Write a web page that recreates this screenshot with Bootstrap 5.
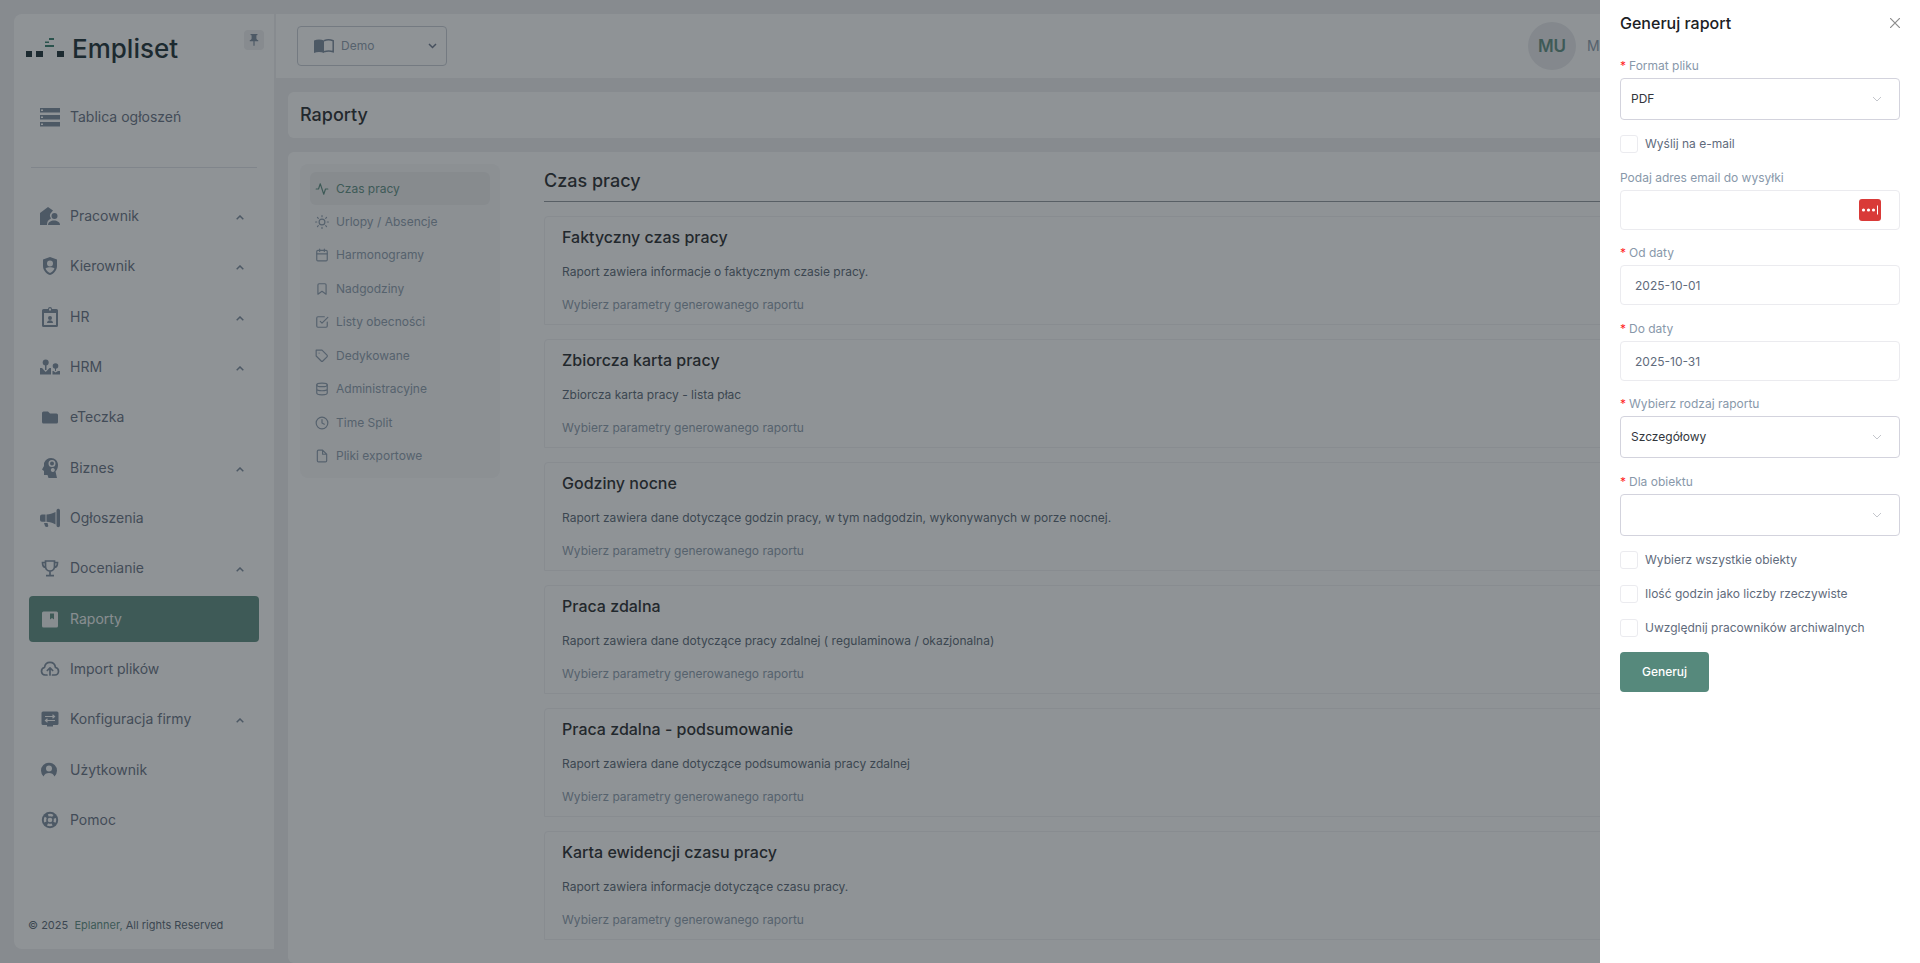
<!DOCTYPE html>
<html lang="pl">
<head>
<meta charset="utf-8">
<meta name="viewport" content="width=device-width, initial-scale=1">
<title>Raporty – Empliset</title>
<link href="https://cdn.jsdelivr.net/npm/bootstrap@5.3.0/dist/css/bootstrap.min.css" rel="stylesheet">
<style>
:root{--green:#56897c;--ink:#1b2124;--slate:#67748a;--muted:#8898aa;--line:#ebebef}
body{font-family:Inter,"Liberation Sans",sans-serif;background:#eeeef0;color:#525f7f;font-size:12px;line-height:20px;height:100vh;overflow:hidden}
a{text-decoration:none;color:inherit}
svg{display:block;flex:none}
.fi{width:14px;height:14px;fill:none;stroke:currentColor;stroke-width:2;stroke-linecap:round;stroke-linejoin:round}
.shell{height:100vh;padding:14px 14px 0}
.sidebar{width:260px;height:calc(100vh - 28px);background:#fff;border-radius:8px 0 0 8px;flex:none}
.brand-row{height:80px;padding:16px 10px 0 12px}
.brand-name{font-size:26px;font-weight:500;line-height:22px;color:#10242a}
.pin{width:20px;height:20px;border-radius:4px;background:#eeeef0;color:#76869a}
.side-link{height:46px;padding:0 15px 0 11px;gap:10px;border-radius:4px;font-size:14px;color:#5f6b7d}
.side-link svg.ico{width:20px;height:20px;fill:#76869a}
.side-link .chev{width:8px;height:5px;fill:none;stroke:#76869a;stroke-width:1.5;margin:3px 0 0 auto}
.side-link.active{background:var(--green);color:#f0f3f3}
.side-link.active svg.ico{fill:#f0f3f3}
.side-menu{padding:0 15px;margin:0;list-style:none}
.side-rule{margin:27px 17px 25px;border-top:1px solid #dfe2e8}
.side-foot{height:106px;padding:72px 14px 0;font-size:11px;color:#525f6f}
.side-foot a{color:var(--green)}
.topbar{height:64px;background:#fff;margin-left:2px;padding:0 0 0 21px}
.firm{width:150px;height:40px;border:1px solid #c6cbd4;border-radius:4px;background:#fff;color:var(--muted);padding:0 9px 0 16px;gap:7px;font-size:12px}
.avatar{width:48px;height:48px;border-radius:50%;background:#e8e9ed;color:var(--green);font-size:17px;font-weight:600}
.user-box{width:378px;gap:11px;font-size:14px;color:var(--muted)}
.page-column{min-width:0}
.content-area{padding:14px 0 0 14px;gap:14px;min-height:0}
.panel{background:#fff;border-radius:6px}
.page-title{font-size:18px;font-weight:500;color:var(--ink);line-height:46px;margin:0;padding:0 12px}
.main-panel{padding:12px;gap:44px;min-height:0}
.tabs-box{width:200px;height:314px;background:#f8f8f9;border-radius:8px;padding:8px 10px 5px;display:grid;grid-auto-rows:1fr;flex:none}
.tabs-box a{padding:0 5px;gap:7px;color:var(--muted);border-radius:6px}
.tabs-box a.active{background:#eeeeef;color:var(--green)}
.section-title{font-size:18px;font-weight:500;color:var(--ink);line-height:34px;margin:0 0 14px;padding-bottom:3px;border-bottom:1px solid #8d9398}
.report{border:1px solid #f0f0f2;border-radius:4px 4px 0 0;padding:7px 17px 8px;margin-bottom:14px}
.report h3{font-size:16px;font-weight:500;line-height:26px;color:var(--ink);margin:0 0 12px}
.report p{margin:0 0 12px;line-height:20px;color:#525f6f}
.report a{display:block;color:var(--muted);line-height:22px}
.offcanvas-backdrop.veil{background:rgb(40,47,53);opacity:.52;width:100%;height:100%}
.offcanvas.drawer{--bs-offcanvas-width:320px;--bs-offcanvas-border-width:0;padding:8px 20px;background:#fff;color:#5f6b7c;outline:0}
.drawer-title{font-size:16px;font-weight:500;line-height:30px;color:var(--ink);margin:0}
.drawer-close{width:10px;height:10px;padding:0;border:0;background:none;color:#8c8c8c}
.drawer form{padding-top:16px}
.field{margin-bottom:12px}
.field-tight{margin-bottom:11px}
.field label,.field-tight label{display:block;line-height:24px;color:var(--muted)}
.req::before{content:"*";color:#ff1f1f;margin-right:3px}
.drawer .form-select{height:42px;border:1px solid #d3d3dd;border-radius:4px;font-size:12px;color:#32363c;padding:0 30px 0 10px;background-image:url("data:image/svg+xml,%3csvg xmlns='http://www.w3.org/2000/svg' viewBox='0 0 10 6'%3e%3cpath d='M1 1l4 4 4-4' fill='none' stroke='%23c4c6cc'/%3e%3c/svg%3e");background-size:10px 6px;background-position:right 17px center}
.drawer .form-control{height:40px;border:1px solid var(--line);border-radius:4px;font-size:12px;color:#5f6b7c;padding:0 14px}
.check-row{height:24px;margin-bottom:10px;gap:7px}
.check-row .form-check-input{width:18px;height:18px;margin:0;border:1px solid var(--line);border-radius:3px;background:#fff}
.pass-icon{right:19px;top:9px}
.go{width:89px;height:40px;margin-top:2px;border:0;border-radius:4px;background:var(--green);color:#fff;font-size:12px;font-weight:500}
</style>
</head>
<body>
<div class="shell d-flex">
  <aside class="sidebar d-flex flex-column">
    <div class="brand-row d-flex align-items-start">
      <a href="#" class="d-flex align-items-start gap-2 mt-1 pt-1">
        <svg width="38" height="30" viewBox="0 0 38 30"><g fill="#10242a"><path d="M0 13h6v6H0zM10 13h7v6h-7zM31 13h7v6h-7z"/></g><path fill="#2e7a66" d="M23 0h5v2h-5zM19 3.500h4v1.500h-4zM19 7h9v2h-9z"/></svg>
        <span class="brand-name">Empliset</span>
      </a>
      <button type="button" class="pin btn p-0 border-0 ms-auto d-flex align-items-center justify-content-center" aria-label="Przypnij">
        <svg width="12" height="12" viewBox="5 2 14 20" fill="currentColor"><path d="M16 9V4h1a1 1 0 0 0 0-2H7a1 1 0 0 0 0 2h1v5c0 1.700-1.300 3-3 3v2h6v7l1 1 1-1v-7h6v-2c-1.700 0-3-1.300-3-3z"/></svg>
      </button>
    </div>
    <div class="side-menu"><a href="#" class="side-link d-flex align-items-center"><svg class="ico" viewBox="0 0 20 20"><path fill-rule="evenodd" d="M0 1h20v4.500H0zM0 8h20v4.500H0zM0 15h20v4.500H0zM1 2.500v1.500h2V2.500zM1 9.500V11h2V9.500zM1 16.500V18h2v-1.500z"/></svg>Tablica ogłoszeń</a></div>
    <div class="side-rule"></div>
    <ul class="side-menu d-flex flex-column justify-content-between flex-grow-1">
      <li><a href="#" class="side-link d-flex align-items-center"><svg class="ico" viewBox="0 0 20 20"><path d="M0 19V7l8-6 5 3.500-2.500 3C9 10 11 12 11 12.500c-3 1.500-4 3-4 6.500z"/><circle cx="14.500" cy="10" r="3"/><path d="M8 19c0-3 3-4.500 6-4.500s6 1.500 6 4.500z"/></svg>Pracownik<svg class="chev" viewBox="0 0 8 5"><path d="M.7 4.300 4 1l3.300 3.300"/></svg></a></li>
      <li><a href="#" class="side-link d-flex align-items-center"><svg class="ico" viewBox="0 0 20 20"><path fill-rule="evenodd" d="M10 1l7 2.600V10c0 4.200-3 7.700-7 9-4-1.300-7-4.800-7-9V3.600zM10 4.500a3 3 0 1 0 0 6 3 3 0 0 0 0-6zM5.500 12.500c1 2 2.500 3.500 4.500 4.500 2-1 3.500-2.500 4.500-4.500-1.500-1-3-1.200-4.500-1.200s-3 .2-4.500 1.200z"/></svg>Kierownik<svg class="chev" viewBox="0 0 8 5"><path d="M.7 4.300 4 1l3.300 3.300"/></svg></a></li>
      <li><a href="#" class="side-link d-flex align-items-center"><svg class="ico" viewBox="0 0 20 20"><path fill-rule="evenodd" d="M2 3.500Q2 2 3.500 2H8a2 2 0 0 1 4 0h4.500Q18 2 18 3.500v15q0 1.500-1.500 1.500h-13Q2 20 2 18.500zM4 6v12h12V6zM9 1.500v2h2v-2z"/><circle cx="10" cy="11" r="2"/><path d="M7 16c0-2 1.500-2.800 3-2.800s3 .8 3 2.800z"/></svg>HR<svg class="chev" viewBox="0 0 8 5"><path d="M.7 4.300 4 1l3.300 3.300"/></svg></a></li>
      <li><a href="#" class="side-link d-flex align-items-center"><svg class="ico" viewBox="0 0 20 20"><circle cx="5.700" cy="5.500" r="3"/><path d="M5 8h1.500v5H5z"/><path d="M0 17.500V11l2 0 3.700 4L9.500 11 11 11v6.500z"/><circle cx="15.500" cy="9" r="2.800"/><path d="M15 11h1v3h-1zM12.500 17.500V14l1 0 2 1.500 2.500-1.500 2 0v3.500z"/></svg>HRM<svg class="chev" viewBox="0 0 8 5"><path d="M.7 4.300 4 1l3.300 3.300"/></svg></a></li>
      <li><a href="#" class="side-link d-flex align-items-center"><svg class="ico" viewBox="0 0 20 20"><path d="M2 6q0-1.500 1.500-1.500H8L10 6.500h6.500Q18 6.500 18 8v7q0 1.500-1.500 1.500h-13Q2 16.500 2 15z"/></svg>eTeczka</a></li>
      <li><a href="#" class="side-link d-flex align-items-center"><svg class="ico" viewBox="0 0 20 20"><path fill-rule="evenodd" d="M4 5C5.500 1.500 8 0 11 0c4 0 7 3 7 7 0 3-1 5-2.500 6.500L17 20H8.500l-1-3H4v-4L2 11.500 4 8zM12 2a3.500 3.500 0 1 0 0 7 3.500 3.500 0 0 0 0-7zM12.800 10a2 2 0 1 0 .01 0z"/><circle cx="12" cy="5.500" r="2"/></svg>Biznes<svg class="chev" viewBox="0 0 8 5"><path d="M.7 4.300 4 1l3.300 3.300"/></svg></a></li>
      <li><a href="#" class="side-link d-flex align-items-center"><svg class="ico" viewBox="0 0 20 20"><path d="M16.500 2.500a1.500 1.500 0 0 1 3.500 0v15a1.500 1.500 0 0 1-3.500 0zM15.500 4v12.500C12 14.500 10 14 6.500 13.800V6.500C10 6.300 12 5.500 15.500 4zM5.500 6.500v7.300H2Q0 13.800 0 12V8.500q0-2 2-2zM4 15h3.500l.8 3q0 1-1.500 1-1.500 0-1.800-1z"/></svg>Ogłoszenia</a></li>
      <li><a href="#" class="side-link d-flex align-items-center"><svg class="ico" viewBox="0 0 20 20"><path fill="none" stroke="#76869a" stroke-width="1.700" d="M5.500 3h9v5.500a4.500 4.500 0 0 1-9 0zM5.500 4.500h-3c0 3 1 5 3.500 5M14.500 4.500h3c0 3-1 5-3.500 5M10 13v4.500M6 17.700h8"/></svg>Docenianie<svg class="chev" viewBox="0 0 8 5"><path d="M.7 4.300 4 1l3.300 3.300"/></svg></a></li>
      <li><a href="#" class="side-link active d-flex align-items-center" aria-current="page"><svg class="ico" viewBox="0 0 20 20"><path fill-rule="evenodd" d="M2 4q0-1.500 1.500-1.500h13Q18 2.500 18 4v13q0 1.500-1.500 1.500h-13Q2 18.500 2 17zM10 4.500v6l2-1.500 2 1.500v-6z"/></svg>Raporty</a></li>
      <li><a href="#" class="side-link d-flex align-items-center"><svg class="ico" viewBox="0 0 20 20"><path fill="none" stroke="#76869a" stroke-width="1.700" stroke-linecap="round" stroke-linejoin="round" d="M7 16H5a3.800 3.800 0 0 1-.5-7.500C5 5 7.500 3.300 10 3.300c3 0 5 2 5.500 5.200 2 .3 3 2 3 3.700 0 2-1.500 3.800-3.500 3.800h-2.500M10 16V9M7.300 11.500 10 8.800l2.700 2.700"/></svg>Import plików</a></li>
      <li><a href="#" class="side-link d-flex align-items-center"><svg class="ico" viewBox="0 0 20 20"><path d="M1.500 4q0-1.500 1.500-1.500h14q1.500 0 1.500 1.500v10.500q0 1.500-1.500 1.500h-4v1.500H7V16H3q-1.500 0-1.500-1.500z"/><path fill="none" stroke="#fff" stroke-width="1.200" d="M5 7.500h9M12.500 5.800l2 1.700-2 1.700M15 11.500H6M7.500 9.800l-2 1.700 2 1.700"/></svg>Konfiguracja firmy<svg class="chev" viewBox="0 0 8 5"><path d="M.7 4.300 4 1l3.300 3.300"/></svg></a></li>
      <li><a href="#" class="side-link d-flex align-items-center"><svg class="ico" viewBox="0 0 20 20"><path fill-rule="evenodd" d="M3.500 16.500A8 8 0 1 1 14.500 16.500C13.500 14 11.500 13 9 13s-4.500 1-5.500 3.500zM9 5.500a3 3 0 1 0 0 6 3 3 0 0 0 0-6z"/></svg>Użytkownik</a></li>
      <li><a href="#" class="side-link d-flex align-items-center"><svg class="ico" viewBox="0 0 20 20"><circle cx="10" cy="10" r="8.200"/><circle cx="10" cy="10" r="5" fill="none" stroke="#fff" stroke-width="2.400" stroke-dasharray="4.800 3.050" stroke-dashoffset="2.400"/><circle cx="10" cy="10" r="2.300" fill="#fff"/></svg>Pomoc</a></li>
    </ul>
    <div class="side-foot">© 2025 &nbsp;<a href="#">Eplanner,</a> All rights Reserved</div>
  </aside>

  <div class="page-column d-flex flex-column flex-grow-1">
    <header class="topbar d-flex align-items-center">
      <button type="button" class="firm d-flex align-items-center">
        <svg width="20" height="14" viewBox="0 0 20 14"><path fill="#76869a" d="M0 1.500C3 0 7 0 10 1.500V14C7 12.500 3 12.500 0 14z"/><path fill="none" stroke="#76869a" stroke-width="1.500" d="M10 1.800c3-1.300 6-1.300 9.200 0v11c-3-1-6-1-9.200 0"/></svg>
        Demo
        <svg class="ms-auto" width="9" height="6" viewBox="0 0 9 6" fill="none" stroke="#67748a" stroke-width="1.500"><path d="M1 1l3.500 3.500L8 1"/></svg>
      </button>
      <div class="user-box d-flex align-items-center ms-auto"><span class="avatar d-flex align-items-center justify-content-center">MU</span><span>M</span></div>
    </header>
    <main class="content-area d-flex flex-column flex-grow-1">
      <div class="panel"><h1 class="page-title">Raporty</h1></div>
      <div class="panel main-panel d-flex flex-grow-1 align-items-start">
        <nav class="tabs-box">
          <a href="#" class="active d-flex align-items-center"><svg class="fi" viewBox="0 0 24 24"><path d="M22 12h-4l-3 9L9 3l-3 9H2"/></svg>Czas pracy</a>
          <a href="#" class="d-flex align-items-center"><svg class="fi" viewBox="0 0 24 24"><circle cx="12" cy="12" r="5"/><path d="M12 1v2M12 21v2M4.220 4.220l1.420 1.420M18.360 18.360l1.420 1.420M1 12h2M21 12h2M4.220 19.780l1.420-1.420M18.360 5.640l1.420-1.420"/></svg>Urlopy / Absencje</a>
          <a href="#" class="d-flex align-items-center"><svg class="fi" viewBox="0 0 24 24"><rect x="3" y="4" width="18" height="18" rx="2"/><path d="M16 2v4M8 2v4M3 10h18"/></svg>Harmonogramy</a>
          <a href="#" class="d-flex align-items-center"><svg class="fi" viewBox="0 0 24 24"><path d="M19 21l-7-5-7 5V5a2 2 0 0 1 2-2h10a2 2 0 0 1 2 2z"/></svg>Nadgodziny</a>
          <a href="#" class="d-flex align-items-center"><svg class="fi" viewBox="0 0 24 24"><path d="M9 11l3 3L22 4M21 12v7a2 2 0 0 1-2 2H5a2 2 0 0 1-2-2V5a2 2 0 0 1 2-2h11"/></svg>Listy obecności</a>
          <a href="#" class="d-flex align-items-center"><svg class="fi" viewBox="0 0 24 24"><path d="M20.590 13.410l-7.170 7.170a2 2 0 0 1-2.830 0L2 12V2h10l8.590 8.590a2 2 0 0 1 0 2.820zM7 7h.01"/></svg>Dedykowane</a>
          <a href="#" class="d-flex align-items-center"><svg class="fi" viewBox="0 0 24 24"><ellipse cx="12" cy="5" rx="9" ry="3"/><path d="M21 12c0 1.660-4 3-9 3s-9-1.340-9-3M3 5v14c0 1.660 4 3 9 3s9-1.340 9-3V5"/></svg>Administracyjne</a>
          <a href="#" class="d-flex align-items-center"><svg class="fi" viewBox="0 0 24 24"><circle cx="12" cy="12" r="10"/><path d="M12 6v6l4 2"/></svg>Time Split</a>
          <a href="#" class="d-flex align-items-center"><svg class="fi" viewBox="0 0 24 24"><path d="M13 2H6a2 2 0 0 0-2 2v16a2 2 0 0 0 2 2h12a2 2 0 0 0 2-2V9zM13 2v7h7"/></svg>Pliki exportowe</a>
        </nav>
        <section class="flex-grow-1">
          <h2 class="section-title">Czas pracy</h2>
          <article class="report"><h3>Faktyczny czas pracy</h3><p>Raport zawiera informacje o faktycznym czasie pracy.</p><a href="#">Wybierz parametry generowanego raportu</a></article>
          <article class="report"><h3>Zbiorcza karta pracy</h3><p>Zbiorcza karta pracy - lista płac</p><a href="#">Wybierz parametry generowanego raportu</a></article>
          <article class="report"><h3>Godziny nocne</h3><p>Raport zawiera dane dotyczące godzin pracy, w tym nadgodzin, wykonywanych w porze nocnej.</p><a href="#">Wybierz parametry generowanego raportu</a></article>
          <article class="report"><h3>Praca zdalna</h3><p>Raport zawiera dane dotyczące pracy zdalnej ( regulaminowa / okazjonalna)</p><a href="#">Wybierz parametry generowanego raportu</a></article>
          <article class="report"><h3>Praca zdalna - podsumowanie</h3><p>Raport zawiera dane dotyczące podsumowania pracy zdalnej</p><a href="#">Wybierz parametry generowanego raportu</a></article>
          <article class="report"><h3>Karta ewidencji czasu pracy</h3><p>Raport zawiera informacje dotyczące czasu pracy.</p><a href="#">Wybierz parametry generowanego raportu</a></article>
        </section>
      </div>
    </main>
  </div>
</div>

<div class="offcanvas-backdrop veil"></div>
<div class="offcanvas offcanvas-end drawer show" tabindex="-1" data-bs-backdrop="false" data-bs-scroll="true" aria-labelledby="drawerTitle">
  <div class="d-flex align-items-center justify-content-between">
    <h2 class="drawer-title" id="drawerTitle">Generuj raport</h2>
    <button type="button" class="drawer-close" aria-label="Zamknij"><svg width="10" height="10" viewBox="0 0 10 10" stroke="currentColor" stroke-width="1.200"><path d="M0 0l10 10M10 0L0 10"/></svg></button>
  </div>
  <form>
    <div class="field"><label class="req" for="fmt">Format pliku</label><select class="form-select" id="fmt"><option>PDF</option></select></div>
    <div class="check-row d-flex align-items-center"><input class="form-check-input" type="checkbox" id="send"><label for="send">Wyślij na e-mail</label></div>
    <div class="field-tight"><label for="mail">Podaj adres email do wysyłki</label>
      <div class="position-relative"><input class="form-control" type="email" id="mail">
        <svg class="pass-icon position-absolute" width="22" height="22" viewBox="0 0 22 22"><rect width="22" height="22" rx="3" fill="#d93a38"/><g fill="#fff"><circle cx="4.500" cy="11" r="1.600"/><circle cx="9.500" cy="11" r="1.600"/><circle cx="14.500" cy="11" r="1.600"/><path d="M18 6.500h1v9h-1z"/></g></svg></div></div>
    <div class="field"><label class="req" for="from">Od daty</label><input class="form-control" type="text" id="from" value="2025-10-01"></div>
    <div class="field-tight"><label class="req" for="to">Do daty</label><input class="form-control" type="text" id="to" value="2025-10-31"></div>
    <div class="field"><label class="req" for="kind">Wybierz rodzaj raportu</label><select class="form-select" id="kind"><option>Szczegółowy</option></select></div>
    <div class="field"><label class="req" for="obj">Dla obiektu</label><select class="form-select" id="obj"><option></option></select></div>
    <div class="check-row d-flex align-items-center"><input class="form-check-input" type="checkbox" id="all"><label for="all">Wybierz wszystkie obiekty</label></div>
    <div class="check-row d-flex align-items-center"><input class="form-check-input" type="checkbox" id="real"><label for="real">Ilość godzin jako liczby rzeczywiste</label></div>
    <div class="check-row d-flex align-items-center"><input class="form-check-input" type="checkbox" id="arch"><label for="arch">Uwzględnij pracowników archiwalnych</label></div>
    <button type="button" class="go">Generuj</button>
  </form>
</div>
<script src="https://cdn.jsdelivr.net/npm/bootstrap@5.3.0/dist/js/bootstrap.bundle.min.js"></script>
</body>
</html>
